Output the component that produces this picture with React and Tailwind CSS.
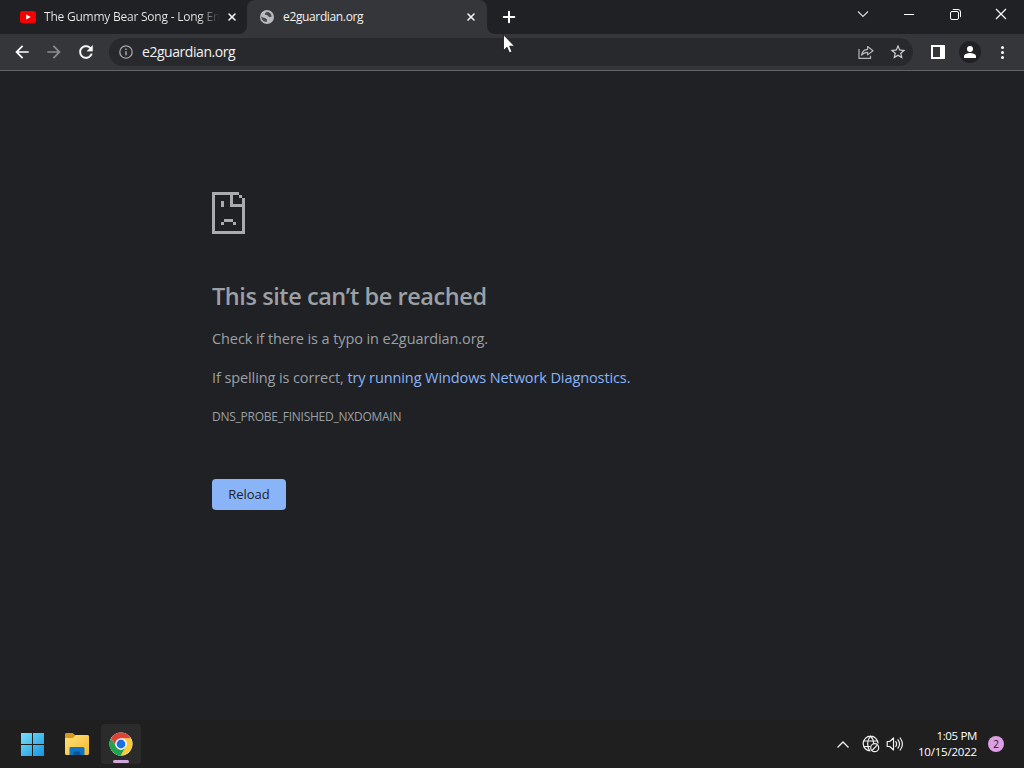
import React from 'react';
import { X, Plus } from 'lucide-react';

const YoutubeIcon = () => (
  <svg width="16" height="12" viewBox="0 0 16 12">
    <rect width="16" height="12" rx="2.6" fill="#f60000" />
    <path d="M6.2 3.4v5.2L10.8 6z" fill="#fff" />
  </svg>
);

const GlobeIcon = () => (
  <svg width="14" height="14" viewBox="0 0 14 14">
    <circle cx="7" cy="7" r="7" fill="#b9bbbf" />
    <path
      d="M1.2 6.2c1 .9 2 1.7 3.7 1.7 1.1 0 .7 1.2 2 1.3v2.6c-3 .5-5.5-1.9-5.7-5.6zM6.6 1.7c-.2 1.300-1.6 1-1.700 2.400.1 1.500 2.500.6 3.200 1.800.6 1.100 1.700 1.100 3.600.900-.1-2.700-2-4.900-5.100-5.100z"
      fill="#47484c"
    />
  </svg>
);

const ArrowIcon = ({ className }) => (
  <svg width="20" height="20" viewBox="0 0 24 24" className={className}>
    <path d="M20 11H7.83l5.59-5.59L12 4l-8 8 8 8 1.41-1.41L7.83 13H20v-2z" fill="currentColor" />
  </svg>
);

const ReloadIcon = () => (
  <svg width="20" height="20" viewBox="0 0 24 24">
    <path
      d="M17.65 6.35C16.2 4.9 14.21 4 12 4c-4.42 0-7.99 3.58-7.99 8s3.57 8 7.99 8c3.73 0 6.84-2.55 7.73-6h-2.08c-.82 2.33-3.04 4-5.65 4-3.31 0-6-2.69-6-6s2.69-6 6-6c1.66 0 3.14.69 4.22 1.78L13 11h7V4l-2.35 2.35z"
      fill="#fff"
      stroke="#fff"
      strokeWidth=".3"
    />
  </svg>
);

const InfoIcon = () => (
  <svg width="14" height="14" viewBox="0 0 14 14" fill="none" stroke="#a5a7ab" strokeWidth="1.3">
    <circle cx="7" cy="7" r="6.2" />
    <path d="M7 6.2v4M7 3.6V5" strokeWidth="1.5" />
  </svg>
);

const ShareIcon = () => (
  <svg width="16" height="16" viewBox="0 0 16 16" fill="none" stroke="#b6b7bb" strokeWidth="1.2">
    <path d="M1 5v9.4h11.5v-2.6" />
    <path d="M3.6 11.2c.5-3.8 2.6-5.7 6-5.9V2.5L15 6.700l-5.400 4.200V8.300c-2.600 0-4.500.8-6 2.900z" strokeLinejoin="round" />
  </svg>
);

const StarIcon = () => (
  <svg width="18" height="18" viewBox="0 0 24 24">
    <path
      d="M22 9.24l-7.19-.62L12 2 9.19 8.63 2 9.24l5.46 4.73L5.82 21 12 17.27 18.18 21l-1.63-7.03L22 9.24zM12 15.4l-3.76 2.27 1-4.28-3.32-2.88 4.38-.38L12 6.1l1.71 4.04 4.38.38-3.32 2.88 1 4.28L12 15.4z"
      fill="#d0d1d4"
    />
  </svg>
);

const SadFileIcon = () => (
  <svg width="33" height="42" viewBox="0 0 11 14" shapeRendering="crispEdges" className="block">
    <path
      d="M0 0h9v1H7v3h4v10H0zM1 1v12h9V5H6V1zM9 1h1v1H9zM10 2h1v2h-1zM3 3h1v2H3zM4 9h3v1H4zM3 10h1v1H3zM7 10h1v1H7z"
      fill="#a9abae"
      fillRule="evenodd"
    />
  </svg>
);

const WindowsLogo = () => (
  <svg width="24" height="24" viewBox="0 0 24 24">
    <defs>
      <linearGradient id="win" x1="0" y1="0" x2="24" y2="24" gradientUnits="userSpaceOnUse">
        <stop offset="0" stopColor="#7be4fa" />
        <stop offset="1" stopColor="#1594e2" />
      </linearGradient>
    </defs>
    <path d="M1 1h11v11H1zM13 1h11v11H13zM1 13h11v11H1zM13 13h11v11H13z" fill="url(#win)" />
  </svg>
);

const FolderIcon = () => (
  <svg width="26" height="24" viewBox="0 0 26 24">
    <defs>
      <linearGradient id="folder" x1="0" y1="0" x2="1" y2="1">
        <stop offset="0" stopColor="#ffe17c" />
        <stop offset="1" stopColor="#f4bb2c" />
      </linearGradient>
    </defs>
    <path d="M1 2.500C1 1.700 1.700 1 2.500 1h6.200l2.800 2.500V8H1z" fill="#d79a18" />
    <path d="M1 6h8l2.600-3H23.500c.8 0 1.500.7 1.500 1.500v17c0 .8-.7 1.500-1.500 1.500h-21C1.700 23 1 22.300 1 21.500z" fill="url(#folder)" />
    <path d="M5.500 23v-6.500c0-.8.7-1.500 1.500-1.500h12c.8 0 1.500.7 1.500 1.500V23z" fill="#1174c4" />
    <path d="M9.500 23v-2c0-.8.7-1.500 1.500-1.500h4c.8 0 1.500.7 1.500 1.500v2z" fill="#0b559b" />
  </svg>
);

const ChromeIcon = () => (
  <svg width="24" height="24" viewBox="0 0 48 48">
    <circle cx="24" cy="24" r="23" fill="#fff" />
    <path d="M24 13H43.920A23 23 0 0 0 4.080 12.500L14.470 29.500A11 11 0 0 1 24 13z" fill="#de4435" />
    <path d="M33.530 29.500L23.570 47A23 23 0 0 0 43.920 13H24A11 11 0 0 1 33.530 29.500z" fill="#fccb36" />
    <path d="M14.470 29.500L4.080 12.500A23 23 0 0 0 23.570 47L33.530 29.500A11 11 0 0 1 14.470 29.500z" fill="#25a04d" />
    <circle cx="24" cy="24" r="11.500" fill="#fff" />
    <circle cx="24" cy="24" r="8.800" fill="#1b6fe4" />
  </svg>
);

const NetworkOffIcon = () => (
  <svg width="18" height="18" viewBox="0 0 18 18" fill="none" stroke="#f0f0f0" strokeWidth="1.2">
    <path d="M8.500 16A7.400 7.400 0 1 1 16 8.500M1.700 6h13.900M1.700 11.500h6.500M7.800 16C4.800 12 4.800 5 8.600 1.200c1.800 1.700 2.900 4 3 6.800" />
    <circle cx="12.700" cy="12.700" r="4" />
    <path d="M10 15.500l5.500-5.600" />
  </svg>
);

const VolumeIcon = () => (
  <svg width="18" height="16" viewBox="0 0 18 16" fill="none" stroke="#f0f0f0" strokeWidth="1.2">
    <path d="M1.200 5.500h2.500L7.500 2v12l-3.800-3.500H1.200z" strokeLinejoin="round" />
    <path d="M9.800 5.600c1 1.500 1 3.300 0 4.800M12 3.800c1.900 2.600 1.900 5.800 0 8.400M14.200 2c2.800 3.800 2.800 8.200 0 12" strokeLinecap="round" />
  </svg>
);

const TabStrip = () => (
  <div className="flex h-[34px] bg-[#35363a]">
    <div className="flex w-[247px] items-center rounded-br-lg bg-[#202124] pl-5">
      <YoutubeIcon />
      <div className="ml-2 w-[182px] whitespace-nowrap text-[12px] tracking-[-0.23px]">
        <span className="bg-gradient-to-r from-[#eceded] from-88% to-[#202124] bg-clip-text text-transparent">
          The Gummy Bear Song - Long En
        </span>
      </div>
      <X size={12} strokeWidth={3.2} className="text-[#f1f1f1]" />
    </div>
    <div className="flex bg-[#202124]">
      <div className="flex w-[240px] items-center rounded-t-lg bg-[#35363a] pl-[13px]">
        <GlobeIcon />
        <span className="ml-[9px] w-[182px] text-[12px] tracking-[-0.36px] text-[#f1f1f2]">e2guardian.org</span>
        <X size={12} strokeWidth={3.2} className="text-[#f1f1f1]" />
      </div>
    </div>
    <div className="flex flex-1 items-center rounded-bl-lg bg-[#202124] pl-[13px]">
      <Plus size={18} strokeWidth={2.7} className="text-white" />
      <div className="ml-auto flex h-7 items-center self-start">
        <div className="flex w-[46px] justify-center">
          <svg width="12" height="8" viewBox="0 0 12 8" fill="none" stroke="#ddd" strokeWidth="1.1">
            <path d="M1 1.500l5 5 5-5" />
          </svg>
        </div>
        <div className="flex w-[46px] justify-center">
          <div className="h-px w-[10px] bg-white" />
        </div>
        <div className="flex w-[46px] justify-center">
          <svg width="11" height="11" viewBox="0 0 11 11" fill="none" stroke="#fff" strokeWidth="1">
            <rect x=".5" y="2.500" width="8" height="8" rx="1.500" />
            <path d="M2.800.500H8a2.500 2.500 0 0 1 2.500 2.500v5.200" />
          </svg>
        </div>
        <div className="flex w-[46px] justify-center">
          <svg width="12" height="12" viewBox="0 0 12 12" stroke="#fff" strokeWidth="1.200">
            <path d="M1 1l10 10M11 1L1 11" />
          </svg>
        </div>
      </div>
    </div>
  </div>
);

const Toolbar = () => (
  <div className="flex h-[37px] items-center border-b border-[#626367] bg-[#35363a] pl-3">
    <ArrowIcon className="text-white" />
    <ArrowIcon className="ml-3 rotate-180 text-[#8b8c90]" />
    <div className="ml-3">
      <ReloadIcon />
    </div>
    <div className="ml-[13px] flex h-7 w-[804px] items-center rounded-full bg-[#28292d] pl-[10px] pr-[6px]">
      <InfoIcon />
      <span className="ml-[9px] pb-[2px] text-[14px] tracking-[-0.45px] text-[#f1f1f2]">e2guardian.org</span>
      <div className="ml-auto flex items-center gap-[15px]">
        <ShareIcon />
        <StarIcon />
      </div>
    </div>
    <svg width="14" height="14" viewBox="0 0 14 14" className="ml-[18px]">
      <path d="M0 0h14v14H0zM2 2v10h7V2z" fill="#fff" fillRule="evenodd" />
    </svg>
    <div className="ml-[14px] flex h-[22px] w-[22px] items-center justify-center rounded-full bg-[#202124]">
      <svg width="12" height="12" viewBox="0 0 12 12" fill="#fff">
        <circle cx="6" cy="3" r="3" />
        <path d="M0 12v-1.800C0 8 4 7 6 7s6 1 6 3.200V12z" />
      </svg>
    </div>
    <div className="ml-[20px] flex flex-col gap-[2px]">
      <div className="h-[3px] w-[3px] rounded-full bg-white" />
      <div className="h-[3px] w-[3px] rounded-full bg-white" />
      <div className="h-[3px] w-[3px] rounded-full bg-white" />
    </div>
  </div>
);

const ErrorPage = () => (
  <main className="h-[649px] bg-[#202124] pl-[212px] pt-[121px] text-[#9aa0a6]">
    <SadFileIcon />
    <h1 className="mt-[47px] whitespace-nowrap text-[23.5px] font-semibold leading-[30px] tracking-[-0.43px]">
      This site can’t be reached
    </h1>
    <p className="mt-[17px] whitespace-nowrap text-[14.5px] leading-[22px] tracking-[-0.09px]">
      Check if there is a typo in e2guardian.org.
    </p>
    <p className="mt-[17px] whitespace-nowrap text-[14.5px] leading-[22px] tracking-[-0.1px]">
      If spelling is correct, <a className="text-[#8ab4f8]">try running Windows Network Diagnostics.</a>
    </p>
    <p className="mt-[18px] whitespace-nowrap text-[12px] leading-[20px] tracking-[-0.25px]">DNS_PROBE_FINISHED_NXDOMAIN</p>
    <button className="mt-[52px] h-[31px] w-[74px] rounded bg-[#8ab4f8] text-[13px] text-[#202124]">Reload</button>
  </main>
);

const Taskbar = () => (
  <footer className="flex h-12 items-center bg-[#1f1f1f] pl-5">
    <WindowsLogo />
    <div className="ml-5">
      <FolderIcon />
    </div>
    <div className="ml-[11px] flex h-10 w-10 flex-col items-center rounded bg-[#2b2b2b] pt-2">
      <ChromeIcon />
      <div className="mt-[4px] h-[3px] w-4 rounded-full bg-[#d2a5dd]" />
    </div>
    <div className="ml-auto flex items-center">
      <svg width="14" height="9" viewBox="0 0 14 9" fill="none" stroke="#f0f0f0" strokeWidth="1.3">
        <path d="M1.500 7.500L7 2l5.500 5.500" />
      </svg>
      <div className="ml-3">
        <NetworkOffIcon />
      </div>
      <div className="ml-[6px]">
        <VolumeIcon />
      </div>
      <div className="ml-[13px] w-[60px] whitespace-nowrap text-right text-[11.5px] leading-4 tracking-[-0.2px] text-white">
        <div className="tracking-[-0.35px]">1:05 PM</div>
        <div>10/15/2022</div>
      </div>
      <div className="ml-[11px] mr-5 flex h-4 w-4 items-center justify-center rounded-full bg-[#dc9ee5] text-[10px] text-[#202020]">
        2
      </div>
    </div>
  </footer>
);

const App = () => {
  return (
    <div className="relative flex h-[768px] w-[1024px] flex-col overflow-hidden bg-[#202124] font-['Open_Sans','Noto_Sans',sans-serif]">
      <TabStrip />
      <Toolbar />
      <ErrorPage />
      <Taskbar />
      {/* Mouse pointer */}
      <svg width="13" height="20" viewBox="0 0 13 20" className="absolute left-[503px] top-[34px]">
        <path d="M.5.8v15.700l3.500-3.300 2.400 5.600 2.600-1.100-2.400-5.500h5z" fill="#fff" stroke="#111" strokeWidth=".8" />
      </svg>
    </div>
  );
};

export default App;
